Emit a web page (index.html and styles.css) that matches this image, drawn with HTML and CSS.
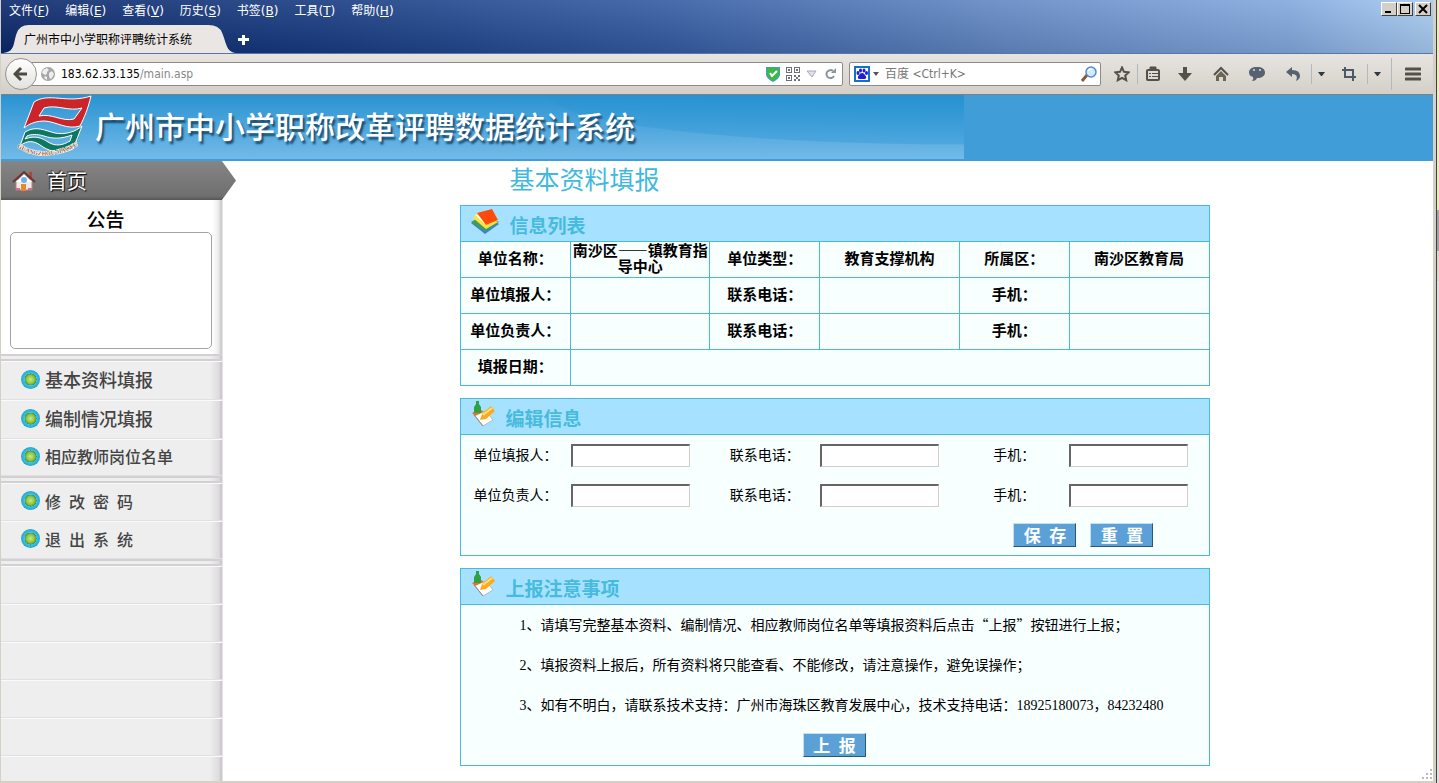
FILE: index.html
```
<!DOCTYPE html>
<html lang="zh-CN">
<head>
    <meta charset="UTF-8">
    <meta name="viewport" content="width=device-width, initial-scale=1.0">
    <title>广州市中小学职称评聘统计系统</title>
    <link rel="stylesheet" href="styles.css">
</head>
<body>
    <div class="window">
        <!-- Title bar: menu and tabs -->
        <div class="titlebar">
            <div class="menu-row">
                <nav class="menu">
                    <a href="#">文件(<u>F</u>)</a>
                    <a href="#">编辑(<u>E</u>)</a>
                    <a href="#">查看(<u>V</u>)</a>
                    <a href="#">历史(<u>S</u>)</a>
                    <a href="#">书签(<u>B</u>)</a>
                    <a href="#">工具(<u>T</u>)</a>
                    <a href="#">帮助(<u>H</u>)</a>
                </nav>
                <div class="window-buttons">
                    <button aria-label="最小化"><svg width="12" height="10"><path d="M2 7h6v2H2z"/></svg></button>
                    <button aria-label="最大化"><svg width="12" height="10"><path d="M1 0h10v10H1zM2 2v7h8V2z" fill-rule="evenodd"/></svg></button>
                    <button aria-label="关闭" class="close"><svg width="12" height="10"><path d="M2 1l8 8M10 1l-8 8" stroke="#000" stroke-width="2"/></svg></button>
                </div>
            </div>
            <div class="tab-row">
                <div class="tab">
                    <svg class="tab-shape" viewBox="0 0 240 28" preserveAspectRatio="none"><path d="M0 28C15 28 12 18 16 8Q19 0 28 0H210Q221 0 224 8C229 20 228 28 240 28z"/></svg>
                    <span class="tab-title">广州市中小学职称评聘统计系统</span>
                </div>
                <button class="new-tab" aria-label="新建标签页"><svg width="12" height="12"><path d="M4 1h3v3h4v3H7v4H4V7H0V4h4z" fill="#fff"/></svg></button>
            </div>
        </div>

        <!-- Navigation toolbar -->
        <div class="toolbar">
            <button class="back" aria-label="后退"><svg width="16" height="16" viewBox="0 0 16 16"><path d="M8 2L2 8l6 6M3 8h11" fill="none" stroke="#4d4a41" stroke-width="3"/></svg></button>
            <div class="url-bar">
                <svg class="globe" width="14" height="14" viewBox="0 0 14 14"><circle cx="7" cy="7" r="7" fill="#a6a6a6"/><path d="M2 3l4-2 2 2-2 2v2L4 8 1 6zM8 6l3-2 2 3-2 4-2 1-1-3zM4 9l2 1v3l-3-2z" fill="#eee"/></svg>
                <div class="url">183.62.33.135<span>/main.asp</span></div>
                <svg width="14" height="16" viewBox="0 0 14 16"><path d="M0 1h14v8q-1 4-7 7-6-3-7-7z" fill="#3b9fc9"/><path d="M1 2h12v7q-1 3-6 6-5-3-6-6z" fill="#40b649"/><path d="M4 7l2 3 5-5" fill="none" stroke="#fff" stroke-width="2"/></svg>
                <svg width="14" height="14" viewBox="0 0 14 14" fill="#6b7078"><path d="M0 0h6v6H0zM1 1v4h4V1zM8 0h6v6H8zM9 1v4h4V1zM0 8h6v6H0zM1 9v4h4V9z" fill-rule="evenodd"/><path d="M2 2h2v2H2zM10 2h2v2h-2zM2 10h2v2H2zM8 8h2v2H8zM12 8h2v2h-2zM10 10h2v2h-2zM8 12h2v2H8zM12 12h2v2h-2z"/></svg>
                <svg width="12" height="8"><path d="M1 1h9L6 7z" fill="#dfe1e5" stroke="#aab"/></svg>
                <svg class="reload" width="12" height="12" viewBox="0 0 12 12"><path d="M9 3a4 4 0 1 0 1 5" fill="none" stroke="#8b949e" stroke-width="2"/><path d="M12 0v5H7z" fill="#8b949e"/></svg>
            </div>
            <div class="search-bar">
                <svg width="16" height="16" viewBox="0 0 16 16"><rect x="1" y="1" width="14" height="14" fill="#fff" stroke="#1473c8" stroke-width="2"/><g fill="#1d1ddb"><ellipse cx="4" cy="7" rx="1.5" ry="2"/><ellipse cx="6.5" cy="4.500" rx="1.500" ry="2"/><ellipse cx="10" cy="4.500" rx="1.500" ry="2"/><ellipse cx="12.500" cy="7" rx="1.500" ry="2"/><path d="M8 7q2 0 3 2 3 4-1 4H6q-4 0-1-4 1-2 3-2z"/></g></svg>
                <svg width="6" height="4"><path d="M0 0h6L3 4z" fill="#555"/></svg>
                <input type="text" aria-label="搜索" placeholder="百度 &lt;Ctrl+K&gt;">
                <svg width="16" height="16" viewBox="0 0 16 16"><path d="M6 9l-5 6" stroke="#8e5a3c" stroke-width="3"/><circle cx="10" cy="6" r="5" fill="#cdeaff" stroke="#5a8ac6" stroke-width="1.500"/><path d="M7 5q1-2 4-2" fill="none" stroke="#fff" stroke-width="1.500"/></svg>
            </div>
            <div class="tools">
                <button class="narrow" aria-label="加入书签"><svg width="16" height="16" viewBox="0 0 16 16"><path d="M8 1.500l2 4.300 4.700.5-3.500 3.200 1 4.700L8 11.800l-4.200 2.400 1-4.700L1.300 6.300 6 5.800z" fill="none" stroke="#55514a" stroke-width="2"/></svg></button>
                <button class="narrow ruled" aria-label="书签列表"><svg width="14" height="16" viewBox="0 0 14 16" fill="none" stroke="#55514a"><rect x="1" y="4" width="12" height="10" rx="1" stroke-width="2"/><path d="M4 3h6V1H4z" fill="#55514a"/><path d="M3 7.500h2M6 7.500h6M3 10.500h2M6 10.500h6"/></svg></button>
                <button aria-label="下载"><svg width="14" height="14" viewBox="0 0 14 14" fill="#55514a"><path d="M5 0h4v6h5l-7 8-7-8h5z"/></svg></button>
                <button aria-label="主页"><svg width="16" height="16" viewBox="0 0 16 16"><path d="M1 9l7-7 7 7" fill="none" stroke="#55514a" stroke-width="2"/><path d="M3 10l5-5 5 5v5h-3v-4H6v4H3z" fill="#6a6557"/></svg></button>
                <button aria-label="聊天"><svg width="16" height="14" viewBox="0 0 16 14"><path d="M8 0c5 0 8 2 8 5.500S13 11 8 11q-1 3-5 3 2-2 1-4-4-1-4-4.500C0 2 3 0 8 0z" fill="#566270"/><circle cx="5" cy="3" r="1" fill="#ddd"/><circle cx="11" cy="3" r="1" fill="#ddd"/></svg></button>
                <button aria-label="撤销"><svg width="16" height="14" viewBox="0 0 16 14"><path d="M7 0v3q8 0 8 6 0 3-4 5 3-7-4-7v3L1 5z" fill="#566270"/></svg></button>
                <button class="caret ruled" aria-label="撤销选项"><svg width="7" height="4"><path d="M0 0h7L4 4H3z" fill="#2d3945"/></svg></button>
                <button aria-label="截图"><svg width="14" height="14" viewBox="0 0 14 14"><path d="M0 3h11v11M3 0v10h11" fill="none" stroke="#4d5966" stroke-width="2"/></svg></button>
                <button class="caret ruled" aria-label="截图选项"><svg width="7" height="4"><path d="M0 0h7L4 4H3z" fill="#2d3945"/></svg></button>
                <button class="main-menu ruled" aria-label="打开菜单"><svg width="16" height="14"><path d="M1 2h14M1 7h14M1 12h14" stroke="#55514a" stroke-width="3" stroke-linecap="round"/></svg></button>
            </div>
        </div>

        <!-- Site -->
        <header class="banner">
            <div class="banner-inner">
                <svg class="logo" viewBox="0 0 78 64">
                    <g stroke="#fff" fill-rule="evenodd">
                        <path d="M19 7C34-3 52 9 76 1 73 14 69 23 65 31 52 35 42 27 30 26 22 26 15 28 9 33zM29 13L24 21C37 18 47 27 59 24L67 13C54 17 42 9 29 13z" fill="#cc2529"/>
                        <path d="M10 37C21 30 31 36 40 38 50 40 60 37 67 31L58 54C47 59 36 57 28 52 19 45 12 45 5 51zM10 44C20 40 27 43 33 47 41 52 48 50 55 46L57 40C46 44 38 44 29 41 22 39 16 39 12 41z" fill="#10775f"/>
                    </g>
                    <defs><path id="ring" d="M2 52Q29 70 64 50"/></defs>
                    <text class="logo-text"><textPath href="#ring">GUANGZHOU JIAOYU</textPath></text>
                </svg>
                <h1>广州市中小学职称改革评聘数据统计系统</h1>
            </div>
        </header>

        <div class="page">
            <aside class="sidebar">
                <a class="home" href="#">
                    <svg width="24" height="22" viewBox="0 0 24 22"><path d="M4 10h16v10H4z" fill="#f4ece4" stroke="#a58a80"/><path d="M17 2h3v6h-3z" fill="#ab4a3b"/><path d="M1 12L12 2l11 10" fill="none" stroke="#6e3333" stroke-width="2"/><path d="M4 12l8-8 8 8" fill="#fff"/><circle cx="12" cy="10" r="3" fill="#67b3f0"/><path d="M9 14h5v7H9z" fill="#e8872c"/><path d="M4 19h4M16 19h4" stroke="#d86a9b" stroke-width="2"/></svg>
                    <span>首页</span>
                </a>
                <div class="side-panel">
                    <section class="bulletin">
                        <h2>公告</h2>
                        <div class="bulletin-box"></div>
                    </section>
                    <ul class="side-menu large">
                        <li><a href="#"><i class="dot"></i>基本资料填报</a></li>
                        <li><a href="#"><i class="dot"></i>编制情况填报</a></li>
                        <li class="small"><a href="#"><i class="dot"></i>相应教师岗位名单</a></li>
                    </ul>
                    <ul class="side-menu">
                        <li><a href="#"><i class="dot"></i>修&ensp;改&ensp;密&ensp;码</a></li>
                        <li><a href="#"><i class="dot"></i>退&ensp;出&ensp;系&ensp;统</a></li>
                    </ul>
                    <ul class="side-menu fill">
                        <li></li>
                        <li></li>
                        <li></li>
                        <li></li>
                        <li></li>
                        <li></li>
                    </ul>
                </div>
            </aside>

            <main class="content">
                <h2 class="page-title">基本资料填报</h2>

                <section class="box">
                    <h3 class="box-title">
                        <svg width="30" height="28" viewBox="0 0 30 28"><path d="M1 15l14 11 14-10-14-8z" fill="#3b86c6"/><path d="M1 14l14 9 14-9-14-8z" fill="#3e9e5c"/><path d="M3 10l13 11 12-7L8 4z" fill="#ffe23c"/><path d="M5 7l11 10 12-5-5-8z" fill="#fff"/><path d="M7 5L22 1l6 11-12 5z" fill="#ff4b0a"/></svg>
                        信息列表
                    </h3>
                    <table class="info">
                        <colgroup>
                            <col class="label-col"><col><col class="label-col"><col><col class="label-col"><col>
                        </colgroup>
                        <tr>
                            <th>单位名称：</th><td>南沙区——镇教育指导中心</td>
                            <th>单位类型：</th><td>教育支撑机构</td>
                            <th>所属区：</th><td>南沙区教育局</td>
                        </tr>
                        <tr>
                            <th>单位填报人：</th><td></td>
                            <th>联系电话：</th><td></td>
                            <th>手机：</th><td></td>
                        </tr>
                        <tr>
                            <th>单位负责人：</th><td></td>
                            <th>联系电话：</th><td></td>
                            <th>手机：</th><td></td>
                        </tr>
                        <tr>
                            <th>填报日期：</th><td colspan="5"></td>
                        </tr>
                    </table>
                </section>

                <section class="box">
                    <h3 class="box-title">
                        <svg width="26" height="26" viewBox="0 0 26 26"><path d="M3 12l10 13 10-6-7-9z" fill="#fff" stroke="#bbb"/><path d="M4 14l9 11" stroke="#888"/><path d="M2 12l8-4 4 3-9 4z" fill="#e8742c"/><path d="M6 0h3v3l2 3v6H4V6l2-3z" fill="#2fa342"/><path d="M10 19l2-6 9-8 4 5-9 8z" fill="#ffa91a"/><path d="M13 14l9-7" stroke="#ffe07a" stroke-width="2"/></svg>
                        编辑信息
                    </h3>
                    <form class="edit">
                        <label for="reporter">单位填报人：</label><input type="text" id="reporter">
                        <label for="reporter_tel">联系电话：</label><input type="text" id="reporter_tel">
                        <label for="reporter_mobile">手机：</label><input type="text" id="reporter_mobile">
                        <label for="leader">单位负责人：</label><input type="text" id="leader">
                        <label for="leader_tel">联系电话：</label><input type="text" id="leader_tel">
                        <label for="leader_mobile">手机：</label><input type="text" id="leader_mobile">
                        <div class="edit-actions">
                            <button type="button" class="btn">保&ensp;存</button>
                            <button type="reset" class="btn">重&ensp;置</button>
                        </div>
                    </form>
                </section>

                <section class="box">
                    <h3 class="box-title">
                        <svg width="26" height="26" viewBox="0 0 26 26"><path d="M3 12l10 13 10-6-7-9z" fill="#fff" stroke="#bbb"/><path d="M4 14l9 11" stroke="#888"/><path d="M2 12l8-4 4 3-9 4z" fill="#e8742c"/><path d="M6 0h3v3l2 3v6H4V6l2-3z" fill="#2fa342"/><path d="M10 19l2-6 9-8 4 5-9 8z" fill="#ffa91a"/><path d="M13 14l9-7" stroke="#ffe07a" stroke-width="2"/></svg>
                        上报注意事项
                    </h3>
                    <div class="notes">
                        <p><span class="num">1</span>、请填写完整基本资料、编制情况、相应教师岗位名单等填报资料后点击“上报”按钮进行上报；</p>
                        <p><span class="num">2</span>、填报资料上报后，所有资料将只能查看、不能修改，请注意操作，避免误操作；</p>
                        <p><span class="num">3</span>、如有不明白，请联系技术支持：广州市海珠区教育发展中心，技术支持电话：<span class="num">18925180073</span>，<span class="num">84232480</span></p>
                        <div class="notes-actions"><button type="button" class="btn">上&ensp;报</button></div>
                    </div>
                </section>
            </main>
            <svg class="grip" width="12" height="12" fill="#bbb"><path d="M9 0h2v2H9zM5 4h2v2H5zM9 4h2v2H9zM1 8h2v2H1zM5 8h2v2H5zM9 8h2v2H9z"/></svg>
        </div>
    </div>
    <div class="desktop-edge"></div>
</body>
</html>
```

FILE: styles.css
```
* {
    box-sizing: border-box;
}

body {
    margin: 0;
    display: flex;
    min-height: 100vh;
    background-color: #d4d0c8;
    font-family: "Noto Sans CJK SC", sans-serif;
    font-size: 14px;
    color: #000;
}

h1, h2, h3, p, ul {
    margin: 0;
    padding: 0;
}

ul {
    list-style: none;
}

a {
    color: inherit;
    text-decoration: none;
}

button {
    border: none;
    padding: 0;
    background: none;
    font-family: inherit;
}

svg {
    flex: none;
}

/* Browser window frame */
.window {
    flex: 1;
    display: flex;
    flex-direction: column;
    border-left: 1px solid #d4d0c8;
    border-bottom: 2px solid #d4d0c8;
}

.desktop-edge {
    width: 6px;
    border-left: 3px solid #d4d0c8;
    background: linear-gradient(to right, #404040 1px, transparent 1px), linear-gradient(#e8edbb 210px, #a5a5a5 210px, #a5a5a5 251px, #ddd6cf 251px, #ddd6cf 281px, #e2e0df 281px);
}

/* Title bar */
.titlebar {
    background: linear-gradient(to bottom, rgba(255, 255, 255, 0.1), rgba(0, 0, 0, 0.1)), linear-gradient(to right, #0a286c 0, #173a80 22%, #3159a0 45%, #6288c4 70%, #82a8de 90%, #a6caf0 100%);
    color: #fff;
    border-bottom: 1px solid #5577aa;
}

.menu-row {
    display: flex;
    justify-content: space-between;
    height: 22px;
}

.menu {
    display: flex;
    gap: 16px;
    padding-left: 8px;
    font: 12px/22px "DejaVu Sans", "Noto Sans CJK SC", sans-serif;
}

.window-buttons {
    display: flex;
    padding: 2px 2px 0 0;
}

.window-buttons button {
    width: 16px;
    height: 14px;
    display: flex;
    align-items: center;
    justify-content: center;
    background-color: #d4d0c8;
    border: 1px solid;
    border-color: #fff #404040 #404040 #fff;
}

.window-buttons .close {
    margin-left: 2px;
}

.tab-row {
    display: flex;
    align-items: flex-end;
    height: 31px;
}

.tab {
    position: relative;
    width: 237px;
    height: 28px;
    color: #000;
}

.tab-shape {
    position: absolute;
    width: 100%;
    height: 100%;
    fill: #eae6e3;
}

.tab-title {
    position: relative;
    padding-left: 23px;
    font-size: 12px;
    line-height: 28px;
}

.new-tab {
    height: 26px;
}

/* Navigation toolbar */
.toolbar {
    display: flex;
    align-items: center;
    height: 41px;
    padding-left: 4px;
    background: linear-gradient(#e8e4e0, #d4d0c8);
    border-bottom: 1px solid #808080;
}

.back {
    position: relative;
    width: 32px;
    height: 32px;
    display: flex;
    align-items: center;
    justify-content: center;
    border: 1px solid #94928e;
    border-radius: 50%;
    background: linear-gradient(#fff, #e4e1dd);
}

.url-bar,
.search-bar {
    display: flex;
    align-items: center;
    height: 24px;
    border: 1px solid #8d8b88;
    border-radius: 2px;
    background-color: #fff;
    font: 12px "DejaVu Sans Condensed", "Noto Sans CJK SC", sans-serif;
}

.url-bar {
    flex: 1;
    gap: 6px;
    margin-left: -8px;
    padding: 0 6px 0 11px;
}

.url {
    flex: 1;
}

.url span {
    color: #888;
}

.search-bar {
    width: 252px;
    gap: 3px;
    margin-left: 6px;
    padding: 0 3px 0 4px;
}

.search-bar input {
    flex: 1;
    min-width: 0;
    border: none;
    font: inherit;
    padding: 0 3px;
}

.search-bar input::placeholder {
    color: #777;
}

.tools {
    display: flex;
    align-items: center;
    padding-left: 6px;
}

.tools button {
    width: 36px;
    height: 20px;
    display: flex;
    align-items: center;
    justify-content: center;
}

.tools .narrow {
    width: 30px;
}

.tools .caret {
    width: 20px;
}

.tools .ruled {
    border-left: 1px solid #b3b8be;
}

.tools .main-menu {
    width: 42px;
    height: 32px;
    margin-left: 4px;
}

/* Site banner */
.banner {
    height: 66px;
    padding-bottom: 2px;
    background-color: #419dd7;
}

.banner-inner {
    display: flex;
    align-items: center;
    max-width: 963px;
    height: 64px;
    padding-left: 14px;
    background: radial-gradient(ellipse 420px 50px at 100% 0, rgba(35, 145, 210, 0.5) 0, rgba(35, 145, 210, 0.3) 98%, transparent 100%), linear-gradient(#2a93d2, #72bae8);
}

.logo {
    width: 78px;
    height: 64px;
}

.logo-text {
    font: bold 6px "Liberation Serif", serif;
    fill: #a8572a;
    stroke: #fff;
    stroke-width: 1px;
    paint-order: stroke;
}

.banner h1 {
    padding: 0 0 4px 2px;
    color: #fff;
    font-size: 30px;
    font-weight: 500;
    line-height: 60px;
    text-shadow: 2px 3px 2px #1c4a6c;
}

/* Page */
.page {
    position: relative;
    flex: 1;
    display: flex;
    background-color: #fff;
}

.grip {
    position: absolute;
    right: 0;
    bottom: 0;
}

.sidebar {
    width: 235px;
    display: flex;
    flex-direction: column;
}

.home {
    display: flex;
    align-items: center;
    gap: 11px;
    height: 39px;
    padding-left: 11px;
    background: linear-gradient(#858585, #6f6f6f 90%, #555);
    clip-path: polygon(0 0, 94% 0, 100% 50%, 94% 100%, 0 100%);
    color: #fff;
    font-size: 20px;
    text-shadow: 1px 1px 1px #000, -1px -1px 1px #333;
}

.side-panel {
    flex: 1;
    display: flex;
    flex-direction: column;
    width: 222px;
    background: linear-gradient(to left, #c9c7c9 1px, #dddbdd 3px, #eee 12px);
    border-right: 1px solid #e6e4e6;
}

.bulletin {
    height: 154px;
    padding: 5px 9px;
    background: linear-gradient(to left, #cfcdcf 1px, #eee 4px, #fff 10px);
}

.bulletin h2 {
    padding-right: 12px;
    font-size: 19px;
    font-weight: 500;
    line-height: 27px;
    text-align: center;
}

.bulletin-box {
    width: 202px;
    height: 117px;
    border: 1px solid #a3a3a3;
    border-radius: 5px;
    background-color: #fff;
}

.side-menu {
    border-top: 7px double #d2d0d2;
    color: #444;
    font-size: 16px;
    font-weight: 500;
}

.side-menu li {
    height: 38px;
    border-top: 1px solid #fafafa;
    border-bottom: 1px solid #e2dfe2;
}

.side-menu.large li {
    height: 39px;
    font-size: 18px;
}

.side-menu.large .small {
    height: 37px;
    font-size: 16px;
}

.side-menu.fill li:last-child {
    height: 24px;
    border-bottom: none;
}

.side-menu a {
    display: flex;
    align-items: center;
    gap: 5px;
    height: 100%;
    padding: 0 0 3px 20px;
}

.dot {
    width: 19px;
    height: 19px;
    border-radius: 50%;
    background: radial-gradient(circle, #cbe78b 0, #8cc63f 4px, #4c8f3a 6px, #42c4e6 6px, #1a9fd0 10px);
}

/* Main content */
.content {
    flex: 1;
    padding: 0 8px 15px;
}

.page-title {
    max-width: 750px;
    margin: 0 auto 10px;
    padding-left: 50px;
    color: #3fb9e0;
    font-size: 25px;
    font-weight: 400;
    line-height: 34px;
}

.box {
    max-width: 750px;
    margin: 0 auto 12px;
    border: 1px solid #46bbdd;
    background-color: #f7ffff;
}

.box-title {
    display: flex;
    gap: 10px;
    height: 36px;
    padding: 2px 9px;
    background-color: #a6e2ff;
    border-bottom: 1px solid #46bbdd;
    color: #46bbdd;
    font-size: 19px;
    font-weight: bold;
    line-height: 34px;
}

.info {
    width: 100%;
    table-layout: fixed;
    border-collapse: collapse;
    border-style: hidden;
    font-size: 15px;
    line-height: 16px;
    font-weight: bold;
    text-align: center;
}

.label-col {
    width: 110px;
}

.info th,
.info td {
    height: 36px;
    padding: 0 0 2px;
    border: 1px solid #46bbdd;
}

.info tr:first-child th,
.info tr:first-child td {
    height: 35px;
}

.edit {
    display: grid;
    grid-template-columns: 110px 1fr 110px 1fr 110px 1fr;
    grid-auto-rows: 40px;
    align-items: center;
}

.edit label {
    padding-bottom: 2px;
    text-align: center;
}

.edit input {
    width: 119px;
    height: 23px;
    border: 2px solid;
    border-color: #666 #d4d0c8 #d4d0c8 #666;
    border-right-width: 1px;
    border-bottom-width: 1px;
    background-color: #fff;
}

.edit-actions {
    grid-column: 1 / -1;
    display: flex;
    justify-content: flex-end;
    gap: 14px;
    padding-right: 55px;
}

.btn {
    width: 63px;
    height: 24px;
    border: 1px solid;
    border-color: #c5e0f2 #2b5675 #2b5675 #c5e0f2;
    background-color: #5ba1d8;
    color: #fff;
    font-size: 17px;
    font-weight: bold;
    line-height: 20px;
}

.notes p {
    padding: 0 0 2px 59px;
    line-height: 38px;
}

.num {
    font-family: "Liberation Serif", serif;
    line-height: 1;
}

.notes-actions {
    display: flex;
    align-items: center;
    justify-content: center;
    height: 40px;
}

.content .box:last-child {
    margin-bottom: 0;
}
```
